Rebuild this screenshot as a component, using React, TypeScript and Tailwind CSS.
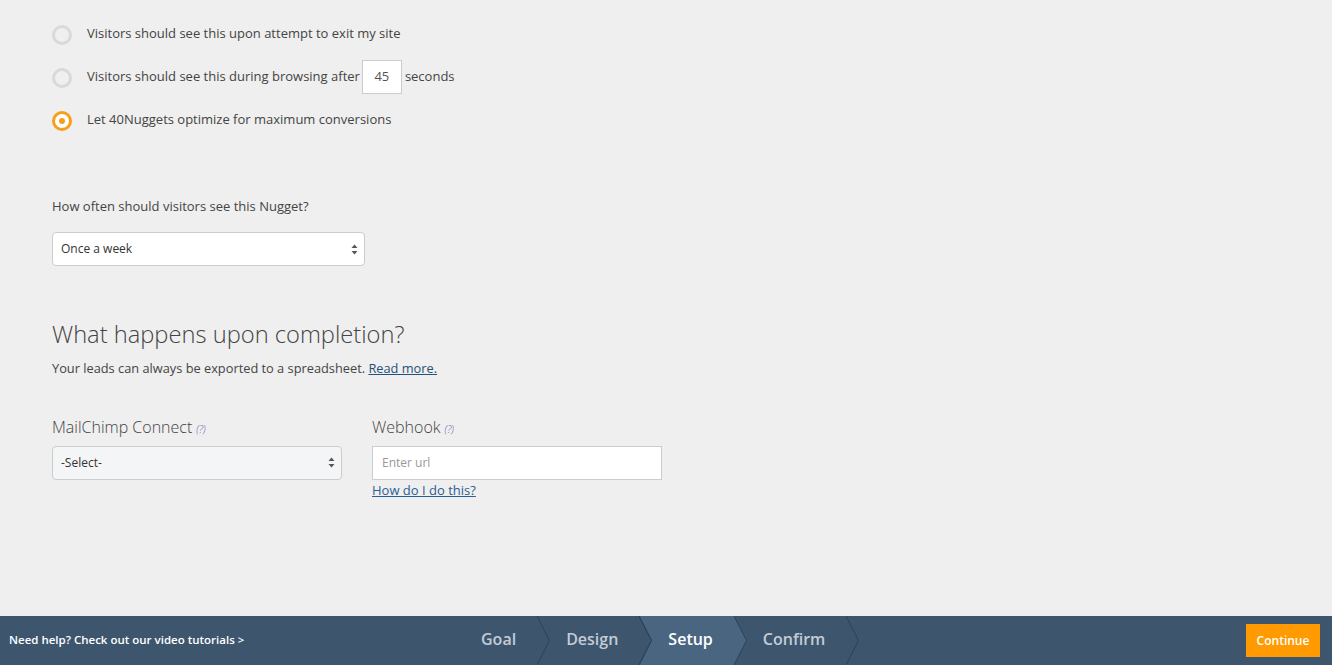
import React from "react";

const font = { fontFamily: '"Open Sans", "Liberation Sans", sans-serif' };

const Radio = ({ checked }: { checked?: boolean }) =>
  checked ? (
    <span className="mt-[1px] flex h-[20px] w-[20px] shrink-0 items-center justify-center rounded-full border-[3px] border-[#f6a01a] bg-white">
      <span className="h-[6px] w-[6px] rounded-full bg-[#f6a01a]" />
    </span>
  ) : (
    <span className="mt-[1px] h-[20px] w-[20px] shrink-0 rounded-full border-[3px] border-[#d6dadd] bg-[#efefef]" />
  );

const Arrows = () => (
  <svg width="7" height="11" viewBox="0 0 7 11" className="shrink-0">
    <path d="M3.5 0.5 L6.5 4 L0.5 4 Z" fill="#555" />
    <path d="M3.5 10.5 L6.5 7 L0.5 7 Z" fill="#555" />
  </svg>
);

const Help = () => (
  <span className="ml-[4px] text-[10px] italic text-[#5d57ad] align-middle">(?)</span>
);

const steps = ["Goal", "Design", "Setup", "Confirm"];

const Step = ({ label, active }: { label: string; active?: boolean }) => (
  <div className="relative flex h-[49px] items-center pl-[29px] pr-[21px]">
    {active && <div className="absolute inset-0 bg-[#4a6580]" />}
    {active && (
      <svg className="absolute left-full top-0" width="13" height="49" viewBox="0 0 13 49">
        <polygon points="0,0 12.5,24.5 0,49" fill="#4a6580" />
      </svg>
    )}
    {active && (
      <svg className="absolute left-0 top-0" width="13" height="49" viewBox="0 0 13 49">
        <polygon points="0,0 12.5,24.5 0,49" fill="#3d566e" />
        <polyline points="0,0 12.5,24.5 0,49" fill="none" stroke="#2d4257" strokeWidth="1" />
      </svg>
    )}
    <span
      className={`relative -mt-[3px] text-[16px] font-semibold ${active ? "text-white" : "text-[#c3ccd6]"}`}
    >
      {label}
    </span>
    <svg className="absolute left-full top-0 z-10" width="13" height="49" viewBox="0 0 13 49">
      <polyline points="0,0 12.5,24.5 0,49" fill="none" stroke="#2d4257" strokeWidth="1" />
    </svg>
  </div>
);

export default function App() {
  return (
    <div className="flex h-screen flex-col bg-[#efefef] text-[#444]" style={font}>
      <main className="flex-1 px-[52px] pt-[17px]">
        <div className="flex flex-col gap-[9px] text-[13px]">
          <div className="flex h-[34px] items-center gap-[15px]">
            <Radio />
            <span>Visitors should see this upon attempt to exit my site</span>
          </div>
          <div className="flex h-[34px] items-center gap-[15px]">
            <Radio />
            <span>Visitors should see this during browsing after</span>
            <span className="-ml-[13px] mr-[-12px] flex h-[34px] w-[40px] items-center justify-center border border-[#ccc] bg-white text-[13px] text-[#555]">
              45
            </span>
            <span>seconds</span>
          </div>
          <div className="flex h-[34px] items-center gap-[15px]">
            <Radio checked />
            <span>Let 40Nuggets optimize for maximum conversions</span>
          </div>
        </div>

        <label className="mt-[60px] block text-[13px] leading-[18px]">
          How often should visitors see this Nugget?
        </label>
        <div className="mt-[17px] flex h-[34px] w-[313px] items-center justify-between rounded-[4px] border border-[#ccc] bg-white pl-[8px] pr-[6px] text-[12px] text-[#333]">
          <span>Once a week</span>
          <Arrows />
        </div>

        <h2 className="mt-[52px] text-[23.7px] font-light leading-[32px] text-[#444]">
          What happens upon completion?
        </h2>
        <p className="mt-[9px] text-[12.8px] leading-[18px]">
          Your leads can always be exported to a spreadsheet.{" "}
          <a className="text-[#24507c] underline">Read more.</a>
        </p>

        <div className="mt-[39px] flex gap-[30px]">
          <div className="w-[290px]">
            <div className="text-[16px] font-light leading-[22px]">
              MailChimp Connect
              <Help />
            </div>
            <div className="mt-[6px] flex h-[34px] items-center justify-between rounded-[4px] border border-[#ccc] bg-[#f4f5f6] pl-[8px] pr-[6px] text-[12px] text-[#333]">
              <span>-Select-</span>
              <Arrows />
            </div>
          </div>
          <div className="w-[290px]">
            <div className="text-[16px] font-light leading-[22px]">
              Webhook
              <Help />
            </div>
            <div className="mt-[6px] flex h-[34px] items-center border border-[#ccc] bg-white pl-[9px] text-[12px] text-[#999]">
              Enter url
            </div>
            <a className="mt-[1px] block text-[13px] leading-[18px] text-[#2a5f92] underline">
              How do I do this?
            </a>
          </div>
        </div>
      </main>

      <footer className="flex h-[49px] shrink-0 items-center bg-[#3d566e]">
        <div className="-mt-[2px] w-[452px] shrink-0 pl-[9px] text-[11.5px] font-semibold text-white">
          Need help? Check out our video tutorials &gt;
        </div>
        <div className="flex">
          {steps.map((s) => (
            <Step key={s} label={s} active={s === "Setup"} />
          ))}
        </div>
        <button className="ml-auto mr-[12px] h-[33px] w-[74px] bg-[#ff9a00] text-[12px] font-semibold text-white">
          Continue
        </button>
      </footer>
    </div>
  );
}
